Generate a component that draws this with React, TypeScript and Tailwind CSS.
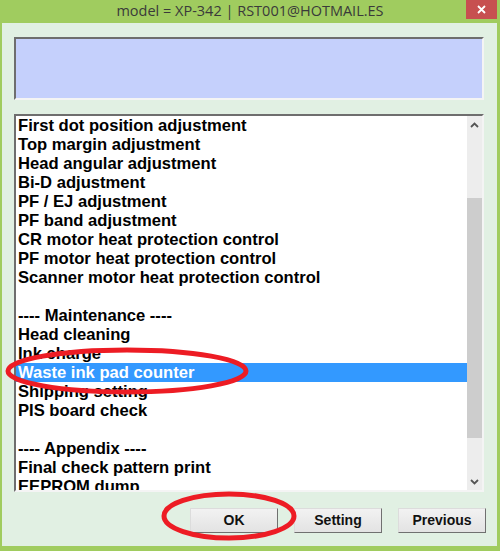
import React from "react"

const items: { label: string; selected?: boolean }[] = [
  { label: "First dot position adjustment" },
  { label: "Top margin adjustment" },
  { label: "Head angular adjustment" },
  { label: "Bi-D adjustment" },
  { label: "PF / EJ adjustment" },
  { label: "PF band adjustment" },
  { label: "CR motor heat protection control" },
  { label: "PF motor heat protection control" },
  { label: "Scanner motor heat protection control" },
  { label: "" },
  { label: "---- Maintenance ----" },
  { label: "Head cleaning" },
  { label: "Ink charge" },
  { label: "Waste ink pad counter", selected: true },
  { label: "Shipping setting" },
  { label: "PIS board check" },
  { label: "" },
  { label: "---- Appendix ----" },
  { label: "Final check pattern print" },
  { label: "EEPROM dump" },
]

function WinButton({ children }: { children: React.ReactNode }) {
  return (
    <button className="w-[88px] h-[25px] border border-t-[#dcdcdc] border-l-[#dcdcdc] border-r-[#707070] border-b-[#707070] bg-gradient-to-b from-[#f2f2f2] to-[#e3e3e3] text-[14px] font-bold text-[#111] [font-family:'Liberation_Sans',Arial,sans-serif]">
      {children}
    </button>
  )
}

export default function App() {
  return (
    <div className="relative w-[500px] h-[551px] bg-[#a0cc5f] flex flex-col [font-family:'Liberation_Sans',Arial,sans-serif]">
      {/* title bar */}
      <div className="relative h-[23px] flex items-center justify-center">
        <span className="text-[14.5px] text-[#3a3a3a] [font-family:'Open_Sans','Liberation_Sans',sans-serif] -mt-[1px]">
          model = XP-342 | RST001@HOTMAIL.ES
        </span>
        <div className="absolute right-[3px] top-0 w-[31px] h-[19px] bg-[#c75050] flex items-center justify-center">
          <svg width="9" height="9" viewBox="0 0 9 9">
            <path d="M1 1 L8 8 M8 1 L1 8" stroke="white" strokeWidth="1.8" />
          </svg>
        </div>
      </div>

      {/* body */}
      <div className="flex-1 ml-[2px] mr-[3px] mb-[5px] bg-[#e1f0e3] pl-[12px] pr-[13px] pt-[14px] flex flex-col">
        <div className="h-[63px] bg-[#c5d0fc] border-2 border-t-[#6e6e6e] border-l-[#6e6e6e] border-r-[#f4f4f4] border-b-[#f4f4f4]" />

        <div className="mt-[14px] h-[378px] flex bg-white border-2 border-t-[#6e6e6e] border-l-[#6e6e6e] border-r-[#f4f4f4] border-b-[#f4f4f4] overflow-hidden">
          <div className="flex-1 overflow-hidden">
            {items.map((it, i) => (
              <div
                key={i}
                className={
                  it.selected
                    ? "h-[19px] leading-[19px] pl-[2px] text-[16.6px] font-bold text-white bg-[#3399ff] whitespace-nowrap"
                    : "h-[19px] leading-[19px] pl-[2px] text-[16.6px] font-bold text-black whitespace-nowrap"
                }
              >
                {it.label}
              </div>
            ))}
          </div>
          <div className="w-[15px] bg-[#ededed] flex flex-col items-center">
            <div className="h-[17px] flex items-center justify-center">
              <svg width="9" height="6" viewBox="0 0 9 6">
                <path d="M1 5 L4.5 1.5 L8 5" stroke="#555" strokeWidth="1.8" fill="none" />
              </svg>
            </div>
            <div className="h-[65px]" />
            <div className="w-[15px] h-[240px] bg-[#cdcdcd]" />
            <div className="flex-1" />
            <div className="h-[17px] flex items-center justify-center">
              <svg width="9" height="6" viewBox="0 0 9 6">
                <path d="M1 1 L4.5 4.5 L8 1" stroke="#555" strokeWidth="1.8" fill="none" />
              </svg>
            </div>
          </div>
        </div>

        <div className="mt-[16px] flex justify-end -mr-[2px]">
          <div className="flex gap-[16px]">
            <WinButton>OK</WinButton>
            <WinButton>Setting</WinButton>
            <WinButton>Previous</WinButton>
          </div>
        </div>
      </div>

      {/* red annotation marks */}
      <svg className="absolute left-0 top-0 pointer-events-none" width="500" height="551">
        <ellipse cx="127" cy="371" rx="119" ry="21" fill="none" stroke="#ed1c24" strokeWidth="5" />
        <ellipse cx="229" cy="516" rx="65" ry="22" fill="none" stroke="#ed1c24" strokeWidth="5" />
      </svg>
    </div>
  )
}
